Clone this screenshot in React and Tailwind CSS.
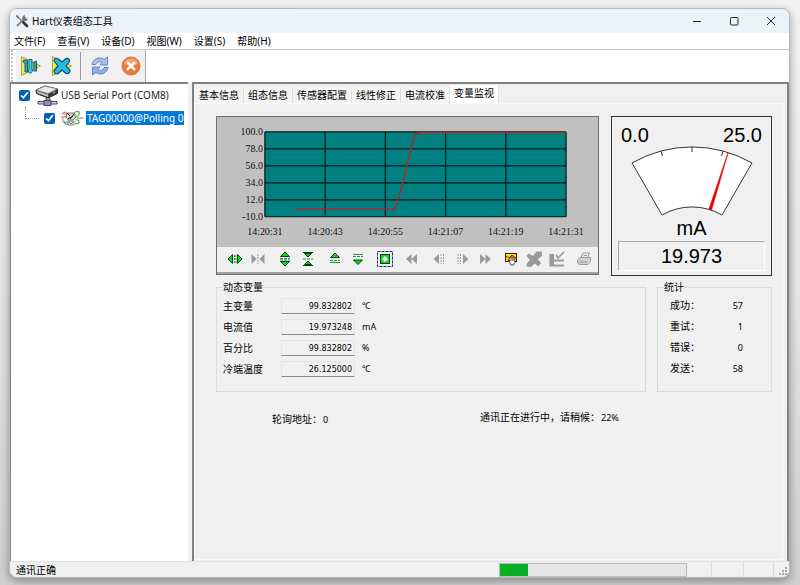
import React from "react";
import clsx from "clsx";

const menus = ["文件(F)", "查看(V)", "设备(D)", "视图(W)", "设置(S)", "帮助(H)"];

const tabs = ["基本信息", "组态信息", "传感器配置", "线性修正", "电流校准", "变量监视"];

const variables = [
  { id: "pv", label: "主变量", value: "99.832802", unit: "℃" },
  { id: "current", label: "电流值", value: "19.973248", unit: "mA" },
  { id: "percent", label: "百分比", value: "99.832802", unit: "%" },
  { id: "cold", label: "冷端温度", value: "26.125000", unit: "℃" },
];

const stats = [
  { label: "成功：", value: 57 },
  { label: "重试：", value: 1 },
  { label: "错误：", value: 0 },
  { label: "发送：", value: 58 },
];

/* ---------- window icons ---------- */

function ToolsIcon() {
  return (
    <svg viewBox="0 0 14 14" className="w-3.5 h-3.5">
      <path d="M1.5 2 L7 7" stroke="#777" strokeWidth="1.2" />
      <path d="M7.5 7.5 L12 12" stroke="#333" strokeWidth="2.6" strokeLinecap="round" />
      <path d="M10 4 L2.5 11.5" stroke="#888" strokeWidth="1.8" strokeLinecap="round" />
      <path d="M10 1 A3 3 0 1 0 13 5 L11 4.6 L9.8 3.2 Z" fill="#777" />
      <path d="M1 1 L3.4 2 L4 4 L2 3.4 Z" fill="#666" />
    </svg>
  );
}

function ConnectIcon() {
  return (
    <svg viewBox="0 0 22 22" className="w-[22px] h-[22px]">
      <path d="M1.5 1.5 L20.5 11 L1.5 20.5 Z" fill="#f7e84e" stroke="#b9a63a" />
      <g stroke="#0a5270" strokeWidth="0.9" strokeLinejoin="round">
        <path d="M3.5 5 L7.5 5 V17 H5 V8 L3 7 Z" fill="#1fa9cf" />
        <path d="M9 4.5 L12 4.5 V15 L13 15.5 L10.5 18.5 L8 16.5 L9 15 Z" fill="#3fd0ea" />
        <path d="M13.8 7 L16.5 6 V16 H14 Z" fill="#1fa9cf" />
      </g>
    </svg>
  );
}

function DisconnectIcon() {
  return (
    <svg viewBox="0 0 22 22" className="w-[22px] h-[22px]">
      <path d="M1.5 1.5 L20.5 11 L1.5 20.5 Z" fill="#f7e84e" stroke="#b9a63a" />
      <path
        d="M3 6 Q3 3 6.5 3.5 L11 7 L15 3.5 Q19 3 18.5 6.5 L15 11 L19 15.5 Q19 19 15 18.5 L11 15 L6.5 19 Q3 19 3 15.5 L7 11 Z"
        fill="#2bbbe0"
        stroke="#0a5270"
        strokeWidth="1.2"
        strokeLinejoin="round"
      />
    </svg>
  );
}

function RefreshIcon() {
  return (
    <svg viewBox="0 0 20 20" className="w-5 h-5" strokeWidth="0.9" strokeLinejoin="round">
      <path
        d="M2 8.5 C3 3 9 0 14 3.5 L17.5 1 V9 H10 L12 6.5 C9.5 4.8 7 6 5.8 8.5 Z"
        fill="#a9c0ef"
        stroke="#5b7bc4"
      />
      <path
        d="M18 11.5 C17 17 11 20 6 16.5 L2.5 19 V11 H10 L8 13.5 C10.5 15.2 13 14 14.2 11.5 Z"
        fill="#90aee8"
        stroke="#5b7bc4"
      />
    </svg>
  );
}

function StopIcon() {
  return (
    <svg viewBox="0 0 20 20" className="w-5 h-5">
      <circle cx="10" cy="10" r="9" fill="#ec7a3c" stroke="#cf7446" />
      <path d="M2.8 8 A7.5 7.5 0 0 1 17.2 8 Q10 11 2.8 8" fill="#f4a173" />
      <path d="M6.8 6.8 L13.2 13.2 M13.2 6.8 L6.8 13.2" stroke="#fff" strokeWidth="2.6" strokeLinecap="round" />
    </svg>
  );
}

function PortIcon() {
  return (
    <svg viewBox="0 0 24 22" className="w-6 h-[22px] shrink-0" strokeLinejoin="round">
      <path d="M1 5 L10 1 L22.5 4 V8.5 L13 13 L1.5 8.5 Z" fill="#3c3c3c" stroke="#222" />
      <path d="M1.5 5 L10 1.2 L22 4 L13 8.5 Z" fill="#e9e9e9" stroke="#999" strokeWidth="0.6" />
      <path d="M2 6 L13 9.5 V12 L2 8 Z" fill="#bdbdbd" />
      <path d="M18 8 L20 7" stroke="#3fd04a" strokeWidth="1.4" />
      <path d="M11 13 H15 V17 H11 Z" fill="#a9a9b4" stroke="#444" strokeWidth="0.7" />
      <path d="M3 16.5 H22 V19 H3 Z" fill="#d4d4e4" stroke="#333" strokeWidth="0.9" />
      <path d="M9 15.5 H16 V20.5 H9 Z" fill="#8f8fc0" stroke="#333" strokeWidth="0.9" />
    </svg>
  );
}

function DeviceIcon() {
  return (
    <svg viewBox="0 0 22 16" className="w-[22px] h-4 shrink-0" fill="none">
      <path d="M0 7 H5 M16 8 H22" stroke="#777" />
      <path d="M0.5 4 L4 2 L7 4 M2 4 H6" stroke="#d66" />
      <path d="M2 8 Q1 12 4 13 L7 11" stroke="#aaa" strokeWidth="1.3" />
      <path d="M6 3 H13 L15 7 L12 10 H7 L5 7 Z" fill="#dcd8c8" stroke="#666" strokeWidth="0.8" />
      <path d="M6 3 L9 6 M13 4 L9 9 M7 9 L12 6" stroke="#222" />
      <path d="M7 11 H13 V15 H7 Z" fill="#eee" stroke="#666" strokeWidth="0.8" />
      <path d="M8 12 L10 14 L12 12" stroke="#444" strokeWidth="0.8" />
      <path d="M13 4 Q15 0 18 2 Q19 5 15 7 M14 10 Q18 9 18 12 Q17 15 14 13 M3 11 Q4 15 7 14" stroke="#4fae4a" strokeWidth="1.2" />
    </svg>
  );
}

/* ---------- chart toolbar icons, all on a 16 x 16 grid ---------- */

const G = "#00e020";
const K = "#123c12";
const D = "#9a9a9a";

const chartIcons = {
  expandX: (
    <>
      <path d="M1 8 L5.5 3.5 V12.5 Z M15 8 L10.5 3.5 V12.5 Z" fill={G} stroke={K} />
      <path d="M7.5 4 V13 M9 4 V13" stroke="#2f8f3a" strokeDasharray="2 1" />
    </>
  ),
  shrinkX: (
    <>
      <path d="M1.5 3 L6.5 8 L1.5 13 Z M14.5 3 L9.5 8 L14.5 13 Z" fill={D} />
      <path d="M8 3 V13" stroke={D} strokeDasharray="2 1" />
    </>
  ),
  expandY: (
    <>
      <path d="M8 1 L12.5 5.5 H3.5 Z M8 15 L12.5 10.5 H3.5 Z" fill={G} stroke={K} />
      <path d="M3 7.5 H13 M3 9 H13" stroke="#2f8f3a" strokeDasharray="3 1" />
    </>
  ),
  shrinkY: (
    <>
      <path d="M8 6 L11.5 2.5 H4.5 Z M8 10 L11.5 13.5 H4.5 Z" fill={G} stroke={K} />
      <path d="M3 1.5 H13 M3 14.5 H13" stroke={K} />
      <path d="M3 8 H13" stroke="#2f8f3a" strokeDasharray="3 1" />
    </>
  ),
  moveUp: (
    <>
      <path d="M8 2 L12.5 6.5 H3.5 Z" fill={G} stroke={K} />
      <path d="M3 9.5 H13" stroke="#2f8f3a" strokeDasharray="3 1" />
      <path d="M3 11.5 H13" stroke="#2f8f3a" />
    </>
  ),
  moveDown: (
    <>
      <path d="M8 13.5 L12.5 9 H3.5 Z" fill={G} stroke={K} />
      <path d="M3 3.5 H13" stroke="#2f8f3a" />
      <path d="M3 5.5 H13" stroke="#2f8f3a" strokeDasharray="3 1" />
    </>
  ),
  fit: (
    <>
      <rect x="0.5" y="0.5" width="15" height="15" fill="none" stroke="#1c1c8c" strokeDasharray="3 1" />
      <rect x="3.5" y="3.5" width="9" height="9" fill={G} stroke={K} />
      <path d="M8 5 L9.5 6.5 L11 8 L9.5 9.5 L8 11 L6.5 9.5 L5 8 L6.5 6.5 Z" fill="#fff" />
    </>
  ),
  fastBack: <path d="M7.5 3 V13 L2 8 Z M13 3 V13 L7.5 8 Z" fill={D} />,
  stepBack: (
    <>
      <path d="M8 3 V13 L2.5 8 Z" fill={D} />
      <path d="M10 3 V13 M12.5 3 V13" stroke={D} strokeDasharray="2 1" />
    </>
  ),
  stepNext: (
    <>
      <path d="M9 3 V13 L14.5 8 Z" fill={D} />
      <path d="M4 3 V13 M6.5 3 V13" stroke={D} strokeDasharray="2 1" />
    </>
  ),
  fastNext: <path d="M3 3 V13 L8.5 8 Z M8.5 3 V13 L14 8 Z" fill={D} />,
  pan: (
    <>
      <rect x="2.5" y="2.5" width="11" height="8" fill="#ffe000" stroke="#222" />
      <path d="M3 5 L6 7 L9 4 L13 7" fill="none" stroke="#c00" />
      <path d="M5 8.5 L7 10 V6.5 H8.2 V5.8 H9.4 V6.5 H10.6 V7.2 H11.8 V11.5 L10.5 14 H8 Z" fill="#fff" stroke="#222" strokeWidth="0.8" />
      <path d="M8.3 7 V10 M9.5 7 V10 M10.6 7.5 V10" stroke="#222" strokeWidth="0.5" />
    </>
  ),
  remove: (
    <path
      d="M0.5 5 L3 2.5 L7 5 L10.5 0.5 H16 V5 L12 8 L15 12.5 L12 15 L8.5 12.5 L5 16 L0.5 15.5 L1 12 L4 9 Z"
      fill={D}
    />
  ),
  config: (
    <>
      <path d="M1.5 3 V14.5 H15 M1.5 9.5 H15" fill="none" stroke={D} strokeWidth="2" />
      <path d="M0.8 3 H5 V14 H0.8 Z" fill={D} />
      <path d="M7 4 L9 7 L15 1" fill="none" stroke={D} strokeWidth="1.6" />
    </>
  ),
  print: (
    <>
      <path d="M5 6.5 L7 2 H13.5 L11.5 6.5" fill="#eee" stroke={D} />
      <path d="M1.5 9 L4.5 6.5 H14.5 V10.5 L12 13.5 H3.5 L1.5 12 Z" fill="#d0d0d0" stroke={D} strokeLinejoin="round" />
      <path d="M3 11 H11 M7.5 4.5 H11" stroke={D} />
    </>
  ),
};

const chartGroups = [
  ["expandX", "shrinkX"],
  ["expandY", "shrinkY"],
  ["moveUp", "moveDown"],
  ["fit"],
  ["fastBack"],
  ["stepBack", "stepNext", "fastNext"],
  ["pan", "remove", "config"],
  ["print"],
];

/* ---------- panels ---------- */

function TrendChart() {
  const ys = ["100.0", "78.0", "56.0", "34.0", "12.0", "-10.0"];
  const xs = ["14:20:31", "14:20:43", "14:20:55", "14:21:07", "14:21:19", "14:21:31"];
  return (
    <div className="flex-1 min-w-0 self-start border border-[#6e6e6e] bg-[#c0c0c0]">
      <svg viewBox="0 0 382 130" className="block w-full">
        <rect x="48" y="15" width="302" height="85" fill="#008080" />
        <g stroke="#0a1414" strokeWidth="1.2">
          {ys.map((label, i) => (
            <line key={label} x1="48" x2="350" y1={15 + i * 17} y2={15 + i * 17} />
          ))}
          {xs.map((label, i) => (
            <line key={label} x1={48 + i * 60.4} x2={48 + i * 60.4} y1="15" y2="100" />
          ))}
        </g>
        <polyline
          points="78,92.5 178,92.5 184,75 197,22 199,17 206,15.5 350,15.5"
          fill="none"
          stroke="#a42c2c"
          strokeWidth="1.5"
        />
        <g className="font-['Liberation_Serif',serif] text-[10px]" fill="#111">
          {ys.map((label, i) => (
            <text key={label} x="46" y={18 + i * 17} textAnchor="end">{label}</text>
          ))}
          {xs.map((label, i) => (
            <text key={label} x={48 + i * 60.4} y="118" textAnchor="middle">{label}</text>
          ))}
        </g>
      </svg>
      <div className="flex h-[27px] items-center bg-[#f0f0f0] pl-2.5 border-b-2 border-[#a0a0a0]">
        {chartGroups.map((group, i) => (
          <div key={group[0]} className={clsx("flex gap-[7px]", i === 6 && "ml-2.5", i !== 0 && i !== 6 && "ml-[11px]")}>
            {group.map((name) => (
              <button key={name} type="button" aria-label={name} className="w-4 h-4">
                <svg viewBox="0 0 16 16" className="w-4 h-4">{chartIcons[name]}</svg>
              </button>
            ))}
          </div>
        ))}
      </div>
    </div>
  );
}

function Gauge() {
  return (
    <div className="flex w-[161px] shrink-0 flex-col border border-[#333] px-1.5 pt-[7px] pb-1 font-['Liberation_Sans',sans-serif] text-xl leading-[22px] text-black">
      <div className="flex justify-between px-[3px]">
        <span>0.0</span>
        <span>25.0</span>
      </div>
      <svg viewBox="0 0 122 71" className="mx-auto w-[122px] h-[71px]">
        <path d="M1 17 A120 120 0 0 1 121 17 L91 69 A60 60 0 0 0 31 69 Z" fill="#fff" stroke="#333" />
        <path d="M30 5 L31.5 10 M61 1 V6 M92 5 L90.5 10" stroke="#333" />
        <path d="M97 7 L80.5 64 L78 63 Z" fill="#e80000" stroke="#e80000" strokeWidth="0.7" />
      </svg>
      <span className="text-center">mA</span>
      <output className="mt-0.5 block border border-t-[#a8a8a8] border-l-[#a8a8a8] border-r-white border-b-white py-[3px] text-center">
        19.973
      </output>
    </div>
  );
}

function DynamicVariables() {
  return (
    <fieldset className="flex-1 min-w-0 border border-[#dcdcdc] px-1.5 pb-3.5">
      <legend className="leading-3">动态变量</legend>
      <div className="flex flex-col gap-[5px] pt-[5px]">
        {variables.map((v) => (
          <div key={v.id} className="flex h-4 items-center">
            <label htmlFor={v.id} className="w-[58px]">{v.label}</label>
            <input
              id={v.id}
              readOnly
              defaultValue={v.value}
              className="h-4 w-[74px] border border-[#e4e4e4] border-b-[#8a8a8a] bg-[#f0f0f0] px-0.5 text-right font-['DejaVu_Sans',sans-serif] text-[8px] outline-none"
            />
            <span className="ml-[7px] font-['Noto_Sans','Noto_Sans_CJK_SC',sans-serif] text-[9px]">{v.unit}</span>
          </div>
        ))}
      </div>
    </fieldset>
  );
}

function Statistics() {
  return (
    <fieldset className="w-[115px] shrink-0 border border-[#dcdcdc] pl-1.5 pr-7 pb-3">
      <legend className="leading-3">统计</legend>
      <dl className="flex flex-col gap-1.5 pt-[5px] pl-1.5">
        {stats.map((s) => (
          <div key={s.label} className="flex h-[15px] items-center justify-between">
            <dt>{s.label}</dt>
            <dd className="font-['Noto_Sans',sans-serif] text-[9px]">{s.value}</dd>
          </div>
        ))}
      </dl>
    </fieldset>
  );
}

function DeviceTree() {
  return (
    <aside className="w-[178px] shrink-0 overflow-hidden border-t-2 border-l border-[#828282] bg-white font-['Noto_Sans',sans-serif] text-[10px]">
      <div className="flex h-[23px] items-center pl-2 whitespace-nowrap">
        <input id="port" type="checkbox" defaultChecked className="w-[11px] h-[11px] mr-[5px] shrink-0 accent-[#005fb8]" />
        <PortIcon />
        <label htmlFor="port" className="ml-0.5 text-[#222]">USB Serial Port (COM8)</label>
      </div>
      <div className="flex h-[22px] items-center pl-3.5 whitespace-nowrap">
        <span className="mb-[11px] mr-[5px] h-3 w-3.5 shrink-0 border-b border-l border-dotted border-[#999]" />
        <input id="tag" type="checkbox" defaultChecked className="w-[11px] h-[11px] mr-1.5 shrink-0 accent-[#005fb8]" />
        <DeviceIcon />
        <label htmlFor="tag" className="ml-[3px] bg-[#0078d7] px-px leading-[14px] text-white">TAG00000@Polling 0</label>
      </div>
    </aside>
  );
}

export default function App() {
  return (
    <div className="flex min-h-screen flex-col bg-linear-to-b from-[#f2f2f2] via-[#e6e6e6] to-[#cfcfcf] pl-[9px] pr-2.5 pt-2 pb-[7px] font-['Noto_Sans','Noto_Sans_CJK_SC',sans-serif] text-[10px] text-black">
      <div className="flex flex-1 flex-col overflow-hidden rounded-lg border border-[#b4b8bc] bg-[#f0f0f0] shadow-[0_3px_9px_rgba(0,0,0,0.35)]">
        {/* Title bar */}
        <header className="flex h-6 items-center bg-linear-to-r from-[#eef3fb] to-[#e9f4f9] pl-[5px] pr-[13px]">
          <ToolsIcon />
          <h1 className="ml-[3px]">Hart仪表组态工具</h1>
          <div className="ml-auto flex gap-[27px]">
            <button type="button" aria-label="最小化">
              <svg viewBox="0 0 10 10" className="w-2.5 h-2.5"><path d="M1 5.5 H9" stroke="#222" /></svg>
            </button>
            <button type="button" aria-label="最大化">
              <svg viewBox="0 0 10 10" className="w-2.5 h-2.5"><rect x="1.5" y="1.5" width="7.5" height="7.5" rx="1" fill="none" stroke="#222" /></svg>
            </button>
            <button type="button" aria-label="关闭">
              <svg viewBox="0 0 10 10" className="w-2.5 h-2.5"><path d="M1 1 L9 9 M9 1 L1 9" stroke="#222" /></svg>
            </button>
          </div>
        </header>

        {/* Menu */}
        <nav className="flex h-[17px] items-center gap-3 border-b border-[#c4c4c4] bg-white pl-1">
          {menus.map((m) => (
            <button key={m} type="button">{m}</button>
          ))}
        </nav>

        {/* Toolbar */}
        <div className="flex h-8 bg-white">
          <div className="ml-px mr-[3px] w-0.5 border-l-2 border-dotted border-[#c0c0c0]" />
          <div className="flex items-center border-r border-[#a8a8a8] bg-[#f0f0f0] px-1">
            <button type="button" aria-label="连接"><ConnectIcon /></button>
            <button type="button" aria-label="断开" className="ml-[9px]"><DisconnectIcon /></button>
            <span className="mx-[7px] h-7 w-px bg-[#9a9a9a]" />
            <button type="button" aria-label="刷新" className="ml-0.5"><RefreshIcon /></button>
            <button type="button" aria-label="停止" className="ml-[11px]"><StopIcon /></button>
          </div>
        </div>

        {/* Main area */}
        <div className="flex flex-1 gap-1">
          <DeviceTree />
          <main className="flex min-w-0 flex-1 flex-col border-t-2 border-l-2 border-r-2 border-[#828282] pr-1 pb-px">
            <div role="tablist" className="flex h-[19px] items-end pl-px">
              {tabs.map((tab, i) => {
                const active = i === tabs.length - 1;
                return (
                  <button
                    key={tab}
                    type="button"
                    role="tab"
                    aria-selected={active}
                    className={clsx(
                      "border-r px-1",
                      active ? "h-[18px] border-[#e2e2e2] bg-white pb-0.5" : "h-4 border-[#dedede] bg-[#f3f3f3]"
                    )}
                  >
                    {tab}
                  </button>
                );
              })}
            </div>
            <div role="tabpanel" className="flex flex-1 flex-col border border-[#fafafa] pl-[21px] pr-2.5 pt-3">
              <div className="flex gap-3">
                <TrendChart />
                <Gauge />
              </div>
              <div className="mt-[5px] flex gap-[11px]">
                <DynamicVariables />
                <Statistics />
              </div>
              <div className="mt-[18px] flex pl-14">
                <p className="w-52 pt-0.5">
                  轮询地址：<span className="ml-px text-[9px]">0</span>
                </p>
                <p>
                  通讯正在进行中，请稍候：<span className="ml-px text-[9px]">22%</span>
                </p>
              </div>
            </div>
          </main>
        </div>

        {/* Status bar */}
        <footer className="flex h-4 items-stretch border-t border-[#e2e2e2] pl-1.5">
          <span className="leading-4">通讯正确</span>
          <div
            role="progressbar"
            aria-label="通讯进度"
            aria-valuenow={15}
            className="ml-auto mt-px w-[188px] border border-[#bcbcbc] bg-[#e6e6e6]"
          >
            <div className="h-full w-[15%] bg-[#06b025]" />
          </div>
          <span className="w-[25px] border-r border-[#dadada]" />
          <span className="w-8 border-r border-[#dadada]" />
          <span className="w-[30px] border-r border-[#dadada]" />
          <svg viewBox="0 0 15 15" className="w-[15px]" fill="#a8a8a8">
            <path d="M11 5h2v2h-2z M8 8h2v2h-2z M11 8h2v2h-2z M5 11h2v2h-2z M8 11h2v2h-2z M11 11h2v2h-2z" />
          </svg>
        </footer>
      </div>
    </div>
  );
}
